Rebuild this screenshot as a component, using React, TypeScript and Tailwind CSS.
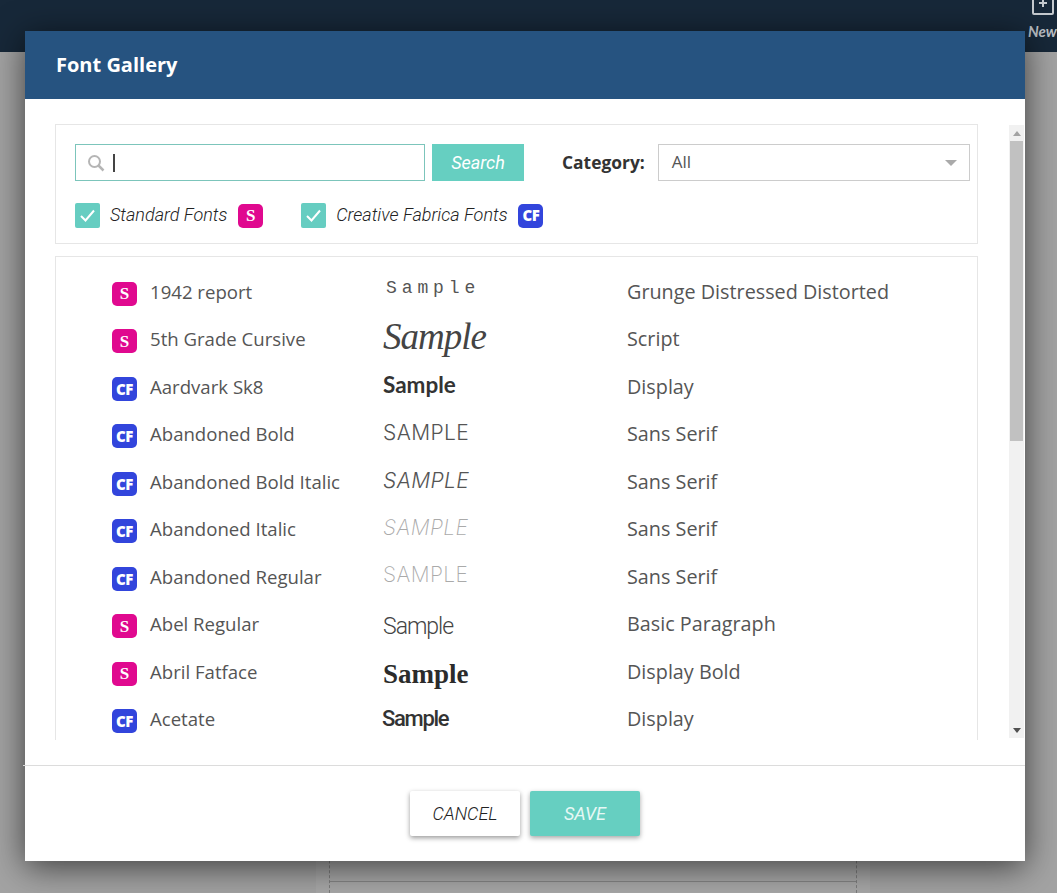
const rows = [
  { badge: "S", name: "1942 report", sample: "Sample", sampleClass: "ml-[3px] font-['Liberation_Mono'] text-[18px] tracking-[4.9px] text-[#555] -mt-[6px]", category: "Grunge Distressed Distorted" },
  { badge: "S", name: "5th Grade Cursive", sample: "Sample", sampleClass: "font-['Liberation_Serif'] italic text-[37px] leading-none tracking-[-1px] text-[#444] -mt-[6px]", category: "Script" },
  { badge: "CF", name: "Aardvark Sk8", sample: "Sample", sampleClass: "font-['Lato'] font-bold text-[22.5px] text-[#333] -mt-[4px]", category: "Display" },
  { badge: "CF", name: "Abandoned Bold", sample: "SAMPLE", sampleClass: "font-['Inter'] font-light text-[21px] tracking-[0.4px] text-[#555] -mt-[3px]", category: "Sans Serif" },
  { badge: "CF", name: "Abandoned Bold Italic", sample: "SAMPLE", sampleClass: "font-['Inter'] font-light italic text-[21px] tracking-[0.4px] text-[#555] -mt-[3px]", category: "Sans Serif" },
  { badge: "CF", name: "Abandoned Italic", sample: "SAMPLE", sampleClass: "font-['Inter'] font-extralight italic text-[21px] tracking-[0.4px] text-[#aaa] -mt-[3px]", category: "Sans Serif" },
  { badge: "CF", name: "Abandoned Regular", sample: "SAMPLE", sampleClass: "font-['Inter'] font-extralight text-[21px] tracking-[0.4px] text-[#aaa] -mt-[5px]", category: "Sans Serif" },
  { badge: "S", name: "Abel Regular", sample: "Sample", sampleClass: "font-['Roboto'] font-light text-[23px] tracking-[-1px] text-[#444] mt-[5px]", category: "Basic Paragraph" },
  { badge: "S", name: "Abril Fatface", sample: "Sample", sampleClass: "font-['Liberation_Serif'] font-bold text-[27px] text-[#2b2b2b] mt-[4px]", category: "Display Bold" },
  { badge: "CF", name: "Acetate", sample: "Sample", sampleClass: "-ml-[1px] font-['Roboto'] font-medium text-[22px] tracking-[-1.3px] text-[#333] -mt-[1px]", category: "Display" },
];

const Badge = ({ type }: { type: string }) => (
  <span
    className={
      type === "S"
        ? "flex h-[24px] w-[25px] items-center justify-center rounded-[5px] bg-[#e0098f] font-['Liberation_Serif'] text-[17px] font-bold text-white"
        : "flex h-[24px] w-[25px] items-center justify-center rounded-[5px] bg-[#3245dc] font-['Open_Sans'] text-[15px] font-extrabold tracking-[-0.5px] text-white"
    }
  >
    {type}
  </span>
);

const CheckBox = () => (
  <span className="flex h-[25px] w-[25px] items-center justify-center rounded-[2px] bg-[#66cdc1]">
    <svg width="17" height="15" viewBox="0 0 17 15" fill="none">
      <path d="M2 8l4.5 4.5L15 2.5" stroke="#fff" strokeWidth="2" />
    </svg>
  </span>
);

const App = () => {
  return (
    <div className="relative h-[893px] w-[1057px] overflow-hidden bg-[#a3a3a3] font-['Open_Sans',sans-serif]">
      {/* page behind the overlay */}
      <div className="flex h-[52px] items-start justify-end bg-[#172839]">
        <div className="flex w-[29px] flex-col items-start overflow-hidden">
          <svg className="ml-[4px]" width="22" height="15" viewBox="0 0 22 15" fill="none">
            <rect x="1" y="-8" width="20" height="22" rx="1" stroke="#c4c9ce" strokeWidth="2" />
            <path d="M11 -1v8M7 3h8" stroke="#c4c9ce" strokeWidth="2" />
          </svg>
          <span className="mt-[2px] font-['Lato'] text-[15px] font-bold italic leading-[28px] text-[#b9bec3]">New</span>
        </div>
      </div>
      <div className="flex h-[841px] pl-[316px]">
        <div className="flex w-[554px] flex-col bg-[#a8a8a8] px-[13px]">
          <div className="mt-[700px] h-[141px] border-x border-dashed border-[#7d7d7d]">
            <div className="mt-[129px] border-t border-[#858585]" />
          </div>
        </div>
      </div>

      {/* modal */}
      <div className="absolute left-[25px] top-[31px] flex h-[830px] w-[1000px] flex-col bg-white shadow-[0_6px_32px_rgba(0,0,0,0.62)]">
        <div className="flex h-[68px] items-center bg-[#265380] pl-[31px] text-[20px] font-bold text-white">
          Font Gallery
        </div>

        <div className="flex h-[666px] pl-[30px] pt-[25px]">
          <div className="flex w-[923px] flex-col gap-[12px]">
            {/* search panel */}
            <div className="h-[120px] border border-[#e6e6e6] pl-[19px] pr-[7px] pt-[19px]">
              <div className="flex h-[37px] items-stretch">
                <div className="flex w-[350px] items-center border border-[#7cc5bb] pl-[11px]">
                  <svg width="18" height="18" viewBox="0 0 18 18" fill="none">
                    <circle cx="7.5" cy="7.5" r="5.5" stroke="#b5b5b5" strokeWidth="2" />
                    <path d="M11.5 11.5l5 5" stroke="#b5b5b5" strokeWidth="2.5" />
                  </svg>
                  <span className="ml-[8px] h-[18px] w-[2px] bg-[#444]" />
                </div>
                <div className="ml-[7px] flex w-[92px] items-center justify-center bg-[#66cfc1] font-['Roboto'] text-[18px] italic text-white">
                  Search
                </div>
                <span className="ml-[38px] flex items-center text-[17.4px] font-bold text-[#333]">Category:</span>
                <div className="ml-[13px] flex w-[312px] items-center justify-between border border-[#ccc] pl-[13px] pr-[12px]">
                  <span className="-mt-[2px] text-[17px] text-[#555]">All</span>
                  <span className="h-0 w-0 border-x-[6px] border-t-[6px] border-x-transparent border-t-[#aaa]" />
                </div>
              </div>
              <div className="mt-[22px] flex h-[25px] items-center">
                <CheckBox />
                <span className="-mt-[2px] ml-[10px] font-['Roboto'] text-[18px] font-light italic leading-none text-[#222]">Standard Fonts</span>
                <span className="ml-[11px]"><Badge type="S" /></span>
                <span className="ml-[38px]"><CheckBox /></span>
                <span className="-mt-[2px] ml-[10px] font-['Roboto'] text-[18px] font-light italic leading-none text-[#222]">Creative Fabrica Fonts</span>
                <span className="ml-[11px]"><Badge type="CF" /></span>
              </div>
            </div>

            {/* font list */}
            <div className="h-[484px] overflow-hidden border-x border-t border-[#e6e6e6] pl-[56px] pt-[11px]">
              {rows.map((row) => (
                <div key={row.name} className="grid h-[47.5px] grid-cols-[38px_233px_244px_1fr] items-center">
                  <span className="mt-[4px]"><Badge type={row.badge} /></span>
                  <span className="text-[18.6px] text-[#555]">{row.name}</span>
                  <span className={row.sampleClass}>{row.sample}</span>
                  <span className="text-[19.8px] text-[#555]">{row.category}</span>
                </div>
              ))}
            </div>
          </div>

          {/* scrollbar */}
          <div className="ml-[31px] mt-[1px] flex h-[613px] w-[15px] flex-col items-center bg-[#f1f1f1]">
            <span className="mt-[6px] h-0 w-0 border-x-[4px] border-b-[5px] border-x-transparent border-b-[#a3a3a3]" />
            <div className="mt-[5px] h-[300px] w-[13px] bg-[#c1c1c1]" />
            <span className="mt-[287px] h-0 w-0 border-x-[4px] border-t-[5px] border-x-transparent border-t-[#505050]" />
          </div>
        </div>

        {/* footer */}
        <div className="-ml-[2px] h-px bg-[#dcdcdc]" />
        <div className="flex flex-1 justify-center gap-[10px] pt-[25px]">
          <div className="flex h-[45px] w-[110px] items-center justify-center rounded-[2px] bg-white font-['Roboto'] text-[18px] font-light italic text-[#222] shadow-[0_2px_5px_rgba(0,0,0,0.4)]">
            CANCEL
          </div>
          <div className="flex h-[45px] w-[110px] items-center justify-center rounded-[2px] bg-[#66cfc1] font-['Roboto'] text-[18px] italic text-[#e6f8f5] shadow-[0_2px_5px_rgba(0,0,0,0.35)]">
            SAVE
          </div>
        </div>
      </div>
    </div>
  );
};

export default App;
